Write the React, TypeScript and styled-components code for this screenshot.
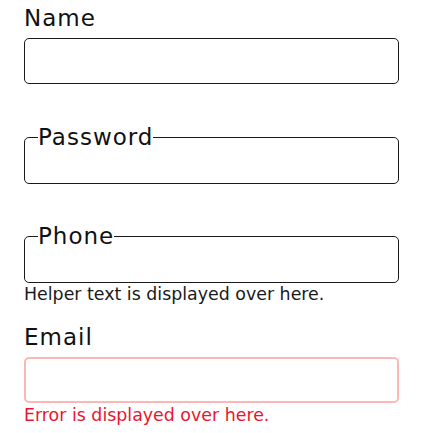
import React from "react";
import styled, { createGlobalStyle } from "styled-components";

const GlobalStyle = createGlobalStyle`
  html, body {
    margin: 0;
    padding: 0;
    background: #ffffff;
  }
  body {
    font-family: "DejaVu Sans", "Liberation Sans", sans-serif;
    color: #111111;
  }
  * { box-sizing: border-box; }
`;

const Page = styled.form`
  display: flex;
  flex-direction: column;
  width: 375px;
  margin-left: 24px;
  padding-top: 5px;
`;

const Field = styled.div<{ $gapAfter?: number }>`
  display: flex;
  flex-direction: column;
  margin-bottom: ${(p) => p.$gapAfter ?? 0}px;
`;

const Label = styled.label`
  font-size: 23px;
  line-height: 26px;
  letter-spacing: 1px;
  color: #111111;
  margin-bottom: 7px;
`;

const Input = styled.input<{ $error?: boolean }>`
  display: block;
  width: 100%;
  height: 46px;
  margin: 0;
  padding: 0 12px;
  font: inherit;
  font-size: 17px;
  border: ${(p) => (p.$error ? "2px solid #ffb6b6" : "1px solid #1a1a1a")};
  border-radius: 5px;
  background: #ffffff;
  outline: none;
`;

const Frame = styled.fieldset`
  margin: 0;
  padding: 0;
  width: 100%;
  min-width: 0;
  border: 1px solid #1a1a1a;
  border-radius: 5px;
`;

const Legend = styled.legend`
  margin-left: 13px;
  padding: 0;
  font-size: 23px;
  line-height: 26px;
  letter-spacing: 1px;
  color: #111111;
`;

const FrameInput = styled.input`
  display: block;
  width: 100%;
  height: 33px;
  margin: 0;
  padding: 0 12px;
  border: none;
  font: inherit;
  font-size: 17px;
  background: transparent;
  outline: none;
`;

const Note = styled.div<{ $error?: boolean }>`
  font-size: 17.4px;
  line-height: 20px;
  color: ${(p) => (p.$error ? "#ea1530" : "#1a1a1a")};
  margin-top: ${(p) => (p.$error ? 2 : 1)}px;
`;

export default function App() {
  return (
    <>
      <GlobalStyle />
      <Page onSubmit={(e) => e.preventDefault()}>
        <Field $gapAfter={40}>
          <Label htmlFor="name">Name</Label>
          <Input id="name" type="text" />
        </Field>
        <Field $gapAfter={39}>
          <Frame>
            <Legend>Password</Legend>
            <FrameInput type="password" />
          </Frame>
        </Field>
        <Field $gapAfter={20}>
          <Frame>
            <Legend>Phone</Legend>
            <FrameInput type="tel" />
          </Frame>
          <Note>Helper text is displayed over here.</Note>
        </Field>
        <Field>
          <Label htmlFor="email">Email</Label>
          <Input id="email" type="email" $error />
          <Note $error>Error is displayed over here.</Note>
        </Field>
      </Page>
    </>
  );
}
